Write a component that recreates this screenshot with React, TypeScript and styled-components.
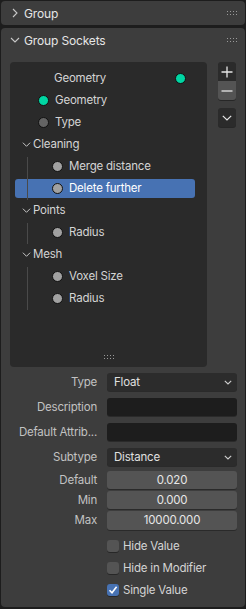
import styled, { createGlobalStyle } from 'styled-components';

const GlobalStyle = createGlobalStyle`
  html, body {
    margin: 0;
    padding: 0;
    background: #1d1d1d;
  }
  body {
    font-family: Inter, "Noto Sans", "DejaVu Sans", sans-serif;
    font-size: 11.5px;
    letter-spacing: -0.2px;
    color: #d4d4d4;
    width: 246px;
    height: 609px;
    overflow: hidden;
  }
`;

type SocketKind = 'geo' | 'float' | 'int';

interface TreeItem {
  kind: 'socket' | 'output' | 'panel';
  label: string;
  socket?: SocketKind;
  child?: boolean;
  selected?: boolean;
  line?: 'start' | 'mid' | 'end' | 'only';
}

const tree: TreeItem[] = [
  { kind: 'output', label: 'Geometry', socket: 'geo' },
  { kind: 'socket', label: 'Geometry', socket: 'geo' },
  { kind: 'socket', label: 'Type', socket: 'int' },
  { kind: 'panel', label: 'Cleaning' },
  { kind: 'socket', label: 'Merge distance', socket: 'float', child: true, line: 'start' },
  { kind: 'socket', label: 'Delete further', socket: 'float', child: true, selected: true, line: 'end' },
  { kind: 'panel', label: 'Points' },
  { kind: 'socket', label: 'Radius', socket: 'float', child: true, line: 'only' },
  { kind: 'panel', label: 'Mesh' },
  { kind: 'socket', label: 'Voxel Size', socket: 'float', child: true, line: 'start' },
  { kind: 'socket', label: 'Radius', socket: 'float', child: true, line: 'end' },
];

export default function App() {
  return (
    <>
      <GlobalStyle />
      <Page>
        <Panel>
          <Header>
            <Chevron dir="right" />
            <HeaderTitle>Group</HeaderTitle>
            <Grip />
          </Header>
        </Panel>
        <Panel $grow>
          <Header>
            <Chevron dir="down" />
            <HeaderTitle>Group Sockets</HeaderTitle>
            <Grip />
          </Header>
          <Body>
            <TreeArea>
              <TreeBox>
                {tree.map((item, i) => (
                  <TreeRowView key={i} item={item} />
                ))}
                <TreeGrip>
                  <DotGrid cols={4} rows={2} />
                </TreeGrip>
              </TreeBox>
              <SideButtons>
                <ButtonGroup>
                  <SideButton>
                    <svg width="12" height="12" viewBox="0 0 12 12">
                      <path d="M6 0.5V11.5M0.5 6H11.5" stroke="#e6e6e6" strokeWidth="1.3" />
                    </svg>
                  </SideButton>
                  <SideButton $light>
                    <svg width="12" height="12" viewBox="0 0 12 12">
                      <path d="M0.5 6H11.5" stroke="#e6e6e6" strokeWidth="1.3" />
                    </svg>
                  </SideButton>
                </ButtonGroup>
                <SideButton $single>
                  <svg width="10" height="6" viewBox="0 0 10 6">
                    <path d="M0.8 0.8L5 5L9.2 0.8" stroke="#e6e6e6" strokeWidth="1.2" fill="none" />
                  </svg>
                </SideButton>
              </SideButtons>
            </TreeArea>

            <Form>
              <FormRow>
                <Label>Type</Label>
                <Dropdown>
                  <span>Float</span>
                  <SmallChevron />
                </Dropdown>
              </FormRow>
              <FormRow>
                <Label>Description</Label>
                <TextField />
              </FormRow>
              <FormRow>
                <Label>Default Attrib...</Label>
                <TextField />
              </FormRow>
              <FormRow>
                <Label>Subtype</Label>
                <Dropdown>
                  <span>Distance</span>
                  <SmallChevron />
                </Dropdown>
              </FormRow>
              <NumberGroup>
                <FormRow>
                  <Label>Default</Label>
                  <NumberField $pos="top">0.020</NumberField>
                </FormRow>
                <FormRow>
                  <Label>Min</Label>
                  <NumberField $pos="mid">0.000</NumberField>
                </FormRow>
                <FormRow>
                  <Label>Max</Label>
                  <NumberField $pos="bottom">10000.000</NumberField>
                </FormRow>
              </NumberGroup>
            </Form>

            <Checks>
              <CheckRow>
                <CheckBox />
                <span>Hide Value</span>
              </CheckRow>
              <CheckRow>
                <CheckBox />
                <span>Hide in Modifier</span>
              </CheckRow>
              <CheckRow>
                <CheckBox $checked>
                  <svg width="10" height="10" viewBox="0 0 10 10">
                    <path d="M1.5 5.2L4 7.8L8.6 1.8" stroke="#fff" strokeWidth="1.6" fill="none" />
                  </svg>
                </CheckBox>
                <span>Single Value</span>
              </CheckRow>
            </Checks>
          </Body>
        </Panel>
      </Page>
    </>
  );
}

function TreeRowView({ item }: { item: TreeItem }) {
  if (item.kind === 'panel') {
    return (
      <TreeRow>
        <PanelLabel>
          <Chevron dir="down" small />
          <span>{item.label}</span>
        </PanelLabel>
      </TreeRow>
    );
  }
  if (item.kind === 'output') {
    return (
      <TreeRow>
        <OutputLabel>{item.label}</OutputLabel>
        <Socket $kind={item.socket ?? 'geo'} $out />
      </TreeRow>
    );
  }
  return (
    <TreeRow>
      {item.line && <IndentLine $part={item.line} />}
      <Item $child={item.child} $selected={item.selected}>
        <Socket $kind={item.socket ?? 'float'} />
        <span>{item.label}</span>
      </Item>
    </TreeRow>
  );
}

function Chevron({ dir, small }: { dir: 'right' | 'down'; small?: boolean }) {
  const s = small ? 9 : 10;
  return (
    <ChevronBox $small={small}>
      <svg width={s} height={s} viewBox="0 0 10 10">
        {dir === 'right' ? (
          <path d="M3 1L7 5L3 9" stroke="#c8c8c8" strokeWidth="1.1" fill="none" />
        ) : (
          <path d="M1 3L5 7L9 3" stroke="#c8c8c8" strokeWidth="1.1" fill="none" />
        )}
      </svg>
    </ChevronBox>
  );
}

function SmallChevron() {
  return (
    <svg width="8" height="5" viewBox="0 0 8 5">
      <path d="M0.8 0.8L4 4L7.2 0.8" stroke="#d0d0d0" strokeWidth="1.1" fill="none" />
    </svg>
  );
}

function DotGrid({ cols, rows }: { cols: number; rows: number }) {
  const dots = [];
  for (let r = 0; r < rows; r++) {
    for (let c = 0; c < cols; c++) {
      dots.push(<rect key={`${r}-${c}`} x={c * 3} y={r * 3} width="1" height="1" fill="#9a9a9a" />);
    }
  }
  return (
    <svg width={cols * 3 - 2} height={rows * 3 - 2} viewBox={`0 0 ${cols * 3 - 2} ${rows * 3 - 2}`}>
      {dots}
    </svg>
  );
}

function Grip() {
  return (
    <GripBox>
      <DotGrid cols={4} rows={2} />
    </GripBox>
  );
}

const Page = styled.div`
  display: flex;
  flex-direction: column;
  gap: 3px;
  padding: 1px 1px 2px 1px;
  height: 609px;
  box-sizing: border-box;
`;

const Panel = styled.div<{ $grow?: boolean }>`
  background: #3d3d3d;
  border-radius: 4px;
  width: 244px;
  display: flex;
  flex-direction: column;
  ${(p) => (p.$grow ? 'flex: 1;' : '')}
`;

const Header = styled.div`
  height: 24px;
  display: flex;
  align-items: center;
  padding: 0 8px 0 8px;
  color: #e6e6e6;
  font-size: 12px;
  letter-spacing: -0.15px;
`;

const HeaderTitle = styled.span`
  flex: 1;
  margin-left: 4px;
`;

const GripBox = styled.div`
  display: flex;
  align-items: center;
  padding-right: 0;
`;

const ChevronBox = styled.span<{ $small?: boolean }>`
  display: inline-flex;
  width: ${(p) => (p.$small ? 10 : 11)}px;
  justify-content: center;
  align-items: center;
`;

const Body = styled.div`
  display: flex;
  flex-direction: column;
  padding: 10px 0 0 9px;
`;

const TreeArea = styled.div`
  display: flex;
  align-items: flex-start;
`;

const TreeBox = styled.div`
  width: 197px;
  height: 305px;
  background: #2a2a2a;
  border-radius: 4px;
  padding-top: 5px;
  box-sizing: border-box;
  display: flex;
  flex-direction: column;
  position: relative;
`;

const TreeGrip = styled.div`
  position: absolute;
  bottom: 8px;
  left: 0;
  right: 0;
  display: flex;
  justify-content: center;
`;

const TreeRow = styled.div`
  height: 22px;
  display: flex;
  align-items: center;
  position: relative;
  color: #d4d4d4;
`;

const IndentLine = styled.div<{ $part: 'start' | 'mid' | 'end' | 'only' }>`
  position: absolute;
  left: 17px;
  width: 1px;
  background: #4a4a4a;
  top: ${(p) => (p.$part === 'start' || p.$part === 'only' ? '2px' : '0')};
  bottom: ${(p) => (p.$part === 'end' || p.$part === 'only' ? '-1px' : '0')};
`;

const Item = styled.div<{ $child?: boolean; $selected?: boolean }>`
  display: flex;
  align-items: center;
  gap: 6px;
  height: 19px;
  box-sizing: border-box;
  margin-left: 5px;
  width: 180px;
  padding-left: ${(p) => (p.$child ? 37 : 23)}px;
  border-radius: 3px;
  background: ${(p) => (p.$selected ? '#4772b3' : 'transparent')};
  color: ${(p) => (p.$selected ? '#ffffff' : '#d4d4d4')};
`;

const OutputLabel = styled.span`
  margin-left: 44px;
  flex: 1;
`;

const PanelLabel = styled.div`
  display: flex;
  align-items: center;
  gap: 2px;
  margin-left: 11px;
  color: #d4d4d4;
`;

const socketColors: Record<SocketKind, string> = {
  geo: '#00d6a3',
  float: '#a1a1a1',
  int: '#646464',
};

const Socket = styled.span<{ $kind: SocketKind; $out?: boolean }>`
  width: 9px;
  height: 9px;
  border-radius: 50%;
  background: ${(p) => socketColors[p.$kind]};
  border: 1px solid #111;
  box-sizing: content-box;
  flex: none;
  margin-right: ${(p) => (p.$out ? '21px' : '0')};
`;

const SideButtons = styled.div`
  display: flex;
  flex-direction: column;
  gap: 8px;
  margin-left: 11px;
`;

const ButtonGroup = styled.div`
  display: flex;
  flex-direction: column;
`;

const SideButton = styled.div<{ $light?: boolean; $single?: boolean }>`
  width: 18px;
  height: 19px;
  display: flex;
  align-items: center;
  justify-content: center;
  background: ${(p) => (p.$light ? '#545454' : '#2b2b2b')};
  border-radius: ${(p) => (p.$single ? '3px' : p.$light ? '0 0 3px 3px' : '3px 3px 0 0')};
  box-shadow: 0 1px 0 rgba(0, 0, 0, 0.35);
`;

const Form = styled.div`
  display: flex;
  flex-direction: column;
  gap: 7px;
  margin-top: 6px;
`;

const NumberGroup = styled.div`
  display: flex;
  flex-direction: column;
  gap: 2px;
  margin-top: -2px;
`;

const FormRow = styled.div`
  display: flex;
  align-items: center;
  height: 18px;
`;

const Label = styled.span`
  width: 87px;
  text-align: right;
  color: #c2c2c2;
  white-space: nowrap;
  overflow: hidden;
  padding-right: 10px;
  box-sizing: content-box;
`;

const fieldBase = `
  width: 130px;
  height: 18px;
  box-sizing: border-box;
  border-radius: 3px;
  box-shadow: 0 1px 0 rgba(0, 0, 0, 0.3);
`;

const Dropdown = styled.div`
  ${fieldBase}
  background: #2c2c2c;
  display: flex;
  align-items: center;
  justify-content: space-between;
  padding: 0 5px 0 7px;
  color: #e0e0e0;
`;

const TextField = styled.div`
  ${fieldBase}
  background: #1d1d1d;
`;

const NumberField = styled.div<{ $pos: 'top' | 'mid' | 'bottom' }>`
  ${fieldBase}
  height: ${(p) => (p.$pos === 'bottom' ? 19 : 18)}px;
  background: #545454;
  color: #e6e6e6;
  display: flex;
  align-items: center;
  justify-content: center;
`;

const Checks = styled.div`
  display: flex;
  flex-direction: column;
  gap: 9px;
  margin-top: 10px;
  padding-left: 97px;
`;

const CheckRow = styled.div`
  display: flex;
  align-items: center;
  gap: 4px;
  height: 13px;
  color: #d4d4d4;
`;

const CheckBox = styled.span<{ $checked?: boolean }>`
  width: 12px;
  height: 12px;
  border-radius: 3px;
  background: ${(p) => (p.$checked ? '#4772b3' : '#545454')};
  box-shadow: 0 1px 0 rgba(0, 0, 0, 0.35);
  display: flex;
  align-items: center;
  justify-content: center;
  flex: none;
`;
